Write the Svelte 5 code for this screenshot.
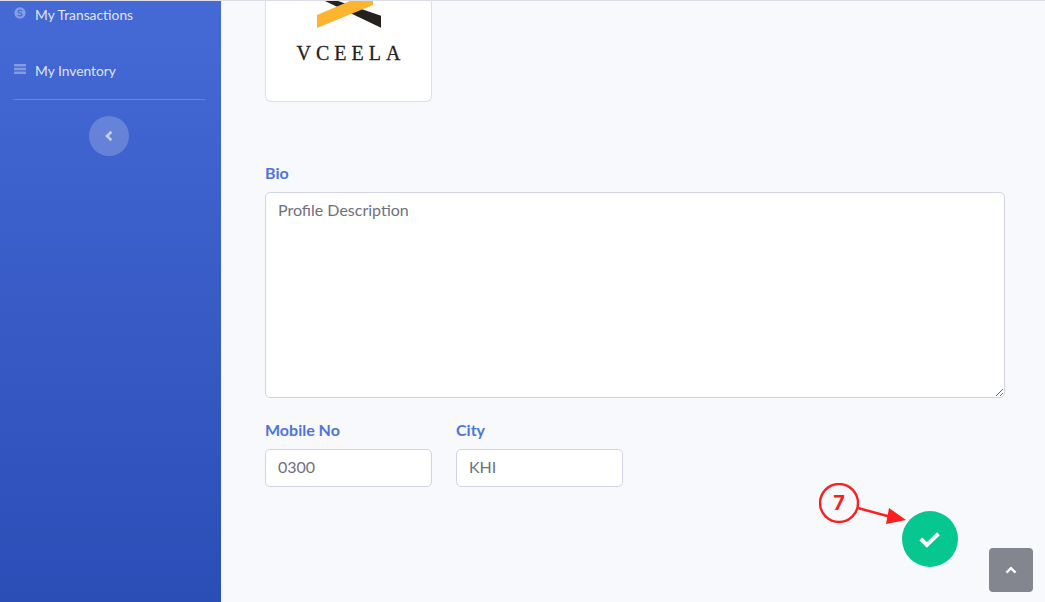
<script lang="ts">
  let bio = $state('Profile Description');
  let mobile = $state('0300');
  let city = $state('KHI');

  const navItems = [
    { label: 'My Transactions', icon: 'dollar' },
    { label: 'My Inventory', icon: 'server' }
  ];
</script>

<div class="page">
  <aside class="sidebar">
    {#each navItems as item}
      <a class="nav-link" href="#top">
        {#if item.icon === 'dollar'}
          <svg class="nav-icon" viewBox="0 0 12 12" width="12" height="12">
            <circle cx="6" cy="6" r="5.700" fill="currentColor" />
            <path d="M8 4.300C7.600 3.500 6.800 3.100 6 3.100c-1.200 0-2 .6-2 1.500C4 6.500 8 5.500 8 7.400 8 8.300 7.200 8.900 6 8.900c-.9 0-1.700-.4-2.100-1.200" fill="none" stroke="#4469d3" stroke-width="1.100" />
          </svg>
        {:else}
          <svg class="nav-icon" viewBox="0 0 12 12" width="12" height="12">
            <rect x="0" y="1" width="12" height="2.600" rx=".5" fill="currentColor" />
            <rect x="0" y="4.700" width="12" height="2.600" rx=".5" fill="currentColor" />
            <rect x="0" y="8.400" width="12" height="2.600" rx=".5" fill="currentColor" />
          </svg>
        {/if}
        <span>{item.label}</span>
      </a>
    {/each}
    <hr class="divider" />
    <button class="toggle" aria-label="Collapse sidebar">
      <svg viewBox="0 0 10 12" width="10" height="12">
        <path d="M7.400 1.800 3 6l4.400 4.200" fill="none" stroke="currentColor" stroke-width="2.600" />
      </svg>
    </button>
  </aside>

  <main class="content">
    <div class="logo-card">
      <svg class="logo-mark" viewBox="0 0 64 28" width="64" height="28" aria-hidden="true">
        <polygon points="8,0 21,0 64,14.700 64,26.700" fill="#26211c" />
        <polygon points="0,14 33,0 56,0 56,4 0,27" fill="#fdb52f" />
      </svg>
      <span class="logo-text">VCEELA</span>
    </div>

    <label class="field-label bio-label" for="bio">Bio</label>
    <textarea id="bio" class="control bio" bind:value={bio}></textarea>

    <div class="row">
      <div class="col">
        <label class="field-label" for="mobile">Mobile No</label>
        <input id="mobile" class="control" bind:value={mobile} />
      </div>
      <div class="col">
        <label class="field-label" for="city">City</label>
        <input id="city" class="control" bind:value={city} />
      </div>
    </div>
  </main>

  <button class="save" aria-label="Save">
    <svg viewBox="0 0 24 24" width="24" height="24">
      <path d="M2.800 12 8.900 18 20.400 6.800" fill="none" stroke="#fff" stroke-width="4" />
    </svg>
  </button>

  <a class="scroll-top" href="#top" aria-label="Back to top">
    <svg viewBox="0 0 12 8" width="12" height="8">
      <path d="M1.500 6.600 6 2.200l4.500 4.400" fill="none" stroke="#fff" stroke-width="2.400" />
    </svg>
  </a>

  <svg class="callout" viewBox="0 0 100 60" width="100" height="60" aria-hidden="true">
    <circle cx="20" cy="20" r="19" fill="#f8f9fc" stroke="#fb2020" stroke-width="2.400" />
    <path d="M39 25 72 34" stroke="#fb2020" stroke-width="2.400" />
    <polygon points="70,25 87,37 67,41" fill="#fb2020" />
    <text x="20" y="27" text-anchor="middle">7</text>
  </svg>
</div>

<style>
  :global(body) {
    margin: 0;
  }
  .page {
    position: relative;
    display: flex;
    width: 1045px;
    height: 602px;
    box-sizing: border-box;
    border-top: 1px solid #dcdde6;
    overflow: hidden;
    background: #f8f9fc;
    font-family: Lato, "Noto Sans", sans-serif;
  }
  .sidebar {
    flex: 0 0 221px;
    display: flex;
    flex-direction: column;
    align-items: center;
    box-sizing: border-box;
    background: linear-gradient(180deg, #456ad6 0%, #2b4db6 100%);
  }
  .nav-link {
    align-self: stretch;
    display: flex;
    align-items: flex-start;
    gap: 9px;
    height: 56px;
    box-sizing: border-box;
    padding: 6px 14px 0;
    color: rgba(255, 255, 255, 0.85);
    font-size: 13.800px;
    line-height: 16px;
    text-decoration: none;
  }
  .nav-icon {
    color: rgba(255, 255, 255, 0.35);
  }
  .divider {
    align-self: stretch;
    margin: -14px 16px 0 13px;
    border: 0;
    border-top: 1px solid rgba(255, 255, 255, 0.2);
  }
  .toggle {
    display: flex;
    align-items: center;
    justify-content: center;
    width: 40px;
    height: 40px;
    margin: 16px 3px 0 0;
    padding: 0;
    border: 0;
    border-radius: 50%;
    background: rgba(255, 255, 255, 0.2);
    color: rgba(255, 255, 255, 0.6);
  }
  .content {
    flex: 1;
    padding: 0 40px 0 44px;
  }
  .logo-card {
    display: flex;
    flex-direction: column;
    align-items: center;
    box-sizing: border-box;
    width: 167px;
    height: 101px;
    border: 1px solid #dcdfec;
    border-top: 0;
    border-radius: 0 0 6px 6px;
    background: #fff;
    color: #26211c;
  }
  .logo-text {
    margin-top: 13px;
    padding-left: 5px;
    font-family: "Liberation Serif", serif;
    font-size: 20px;
    line-height: 22px;
    letter-spacing: 5px;
    -webkit-text-stroke: 0.3px #26211c;
  }
  .field-label {
    display: block;
    margin-bottom: 7px;
    color: #4e73df;
    font-size: 16px;
    font-weight: 700;
    line-height: 24px;
  }
  .bio-label {
    margin-top: 59px;
  }
  .control {
    display: block;
    box-sizing: border-box;
    width: 100%;
    padding: 5px 12px 7px;
    border: 1px solid #d1d3e2;
    border-radius: 5px;
    background: #fff;
    color: #6e707e;
    font-family: inherit;
    font-size: 16px;
    line-height: 24px;
    outline: none;
  }
  .bio {
    height: 206px;
  }
  .row {
    display: flex;
    gap: 24px;
    margin-top: 20px;
  }
  .col {
    width: 167px;
  }
  .col .control {
    height: 38px;
    padding-top: 4px;
    padding-bottom: 8px;
  }
  .save {
    position: absolute;
    left: 902px;
    top: 510px;
    display: flex;
    align-items: center;
    justify-content: center;
    width: 56px;
    height: 56px;
    padding: 0;
    border: 0;
    border-radius: 50%;
    background: #06c78f;
  }
  .scroll-top {
    position: absolute;
    left: 989px;
    top: 547px;
    display: flex;
    align-items: center;
    justify-content: center;
    width: 44px;
    height: 44px;
    border-radius: 4px;
    background: #84868f;
  }
  .callout {
    position: absolute;
    left: 819px;
    top: 482px;
  }
  .callout text {
    fill: #fb2020;
    font-family: Inter, sans-serif;
    font-size: 20px;
    font-weight: 700;
  }
</style>
